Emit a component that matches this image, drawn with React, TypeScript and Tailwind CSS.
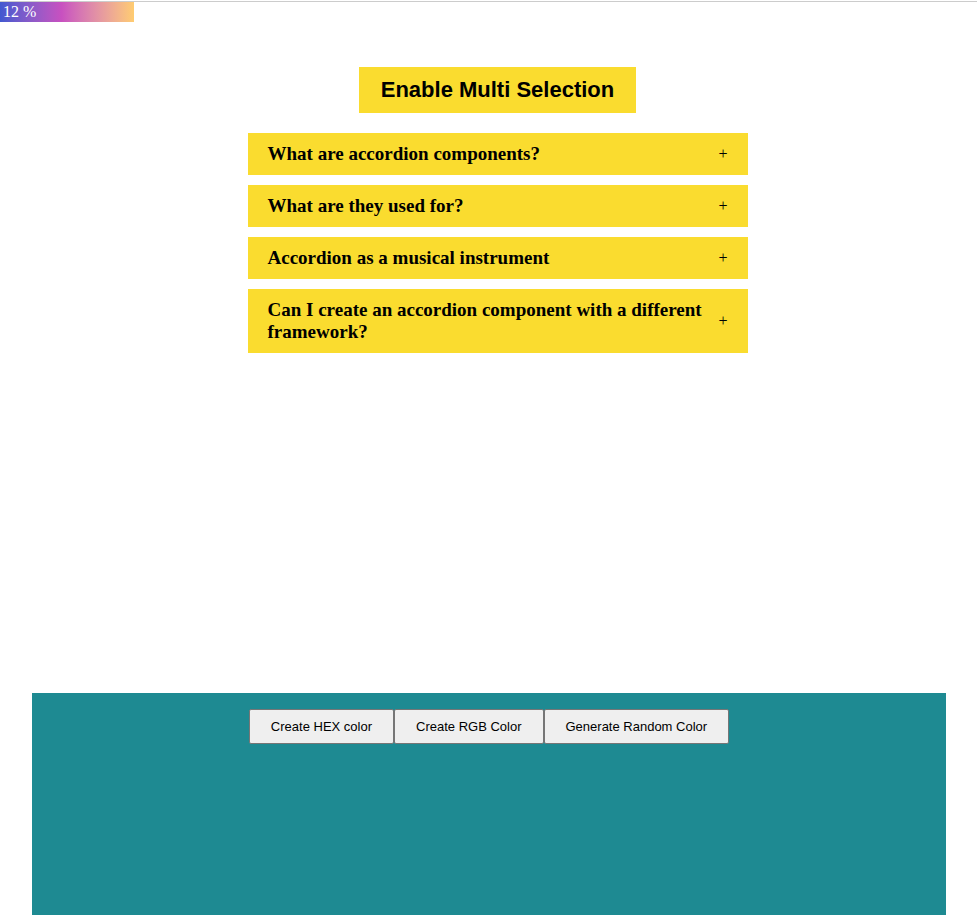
import { useState } from "react";

const questions = [
  "What are accordion components?",
  "What are they used for?",
  "Accordion as a musical instrument",
  "Can I create an accordion component with a different framework?",
];

const colorActions = ["Create HEX color", "Create RGB Color", "Generate Random Color"];

function ProgressBar({ value }: { value: number }) {
  return (
    <div className="pt-px">
      <div className="border-t border-[#cccccc]">
        <div
          className="flex h-5 w-[134px] items-center bg-linear-to-r from-[#4158d0] via-[#c850c0] via-46% to-[#ffcc70] pl-[3px] text-base text-white"
          role="progressbar"
          aria-label="Scroll progress"
          aria-valuenow={value}
        >
          {value} %
        </div>
      </div>
    </div>
  );
}

function Accordion() {
  const [multi, setMulti] = useState(false);
  const [open, setOpen] = useState<number[]>([]);

  const toggle = (index: number) => {
    if (open.includes(index)) setOpen(open.filter((i) => i !== index));
    else setOpen(multi ? [...open, index] : [index]);
  };

  return (
    <section className="flex min-h-[671px] flex-col items-center gap-5 pt-[45px] pl-[18px]">
      <button
        type="button"
        aria-pressed={multi}
        onClick={() => setMulti(!multi)}
        className="bg-[#fadc2f] px-[22px] py-[11px] font-['Liberation_Sans',Arial,sans-serif] text-[22px] leading-6 font-bold text-black"
      >
        Enable Multi Selection
      </button>
      <div className="flex w-full max-w-[500px] flex-col gap-[10px]">
        {questions.map((question, index) => (
          <button
            key={question}
            type="button"
            aria-expanded={open.includes(index)}
            onClick={() => toggle(index)}
            className="flex items-center justify-between gap-2 bg-[#fadc2f] px-5 py-[10px] text-left text-black"
          >
            <span className="text-[19px] leading-[22px] font-bold">{question}</span>
            <span className="text-base leading-5">+</span>
          </button>
        ))}
      </div>
    </section>
  );
}

function ColorGenerator() {
  return (
    <section className="mr-[31px] ml-8 flex h-[222px] items-start justify-center bg-[#1e8a92] pt-4">
      {colorActions.map((label) => (
        <button
          key={label}
          type="button"
          className="h-[35px] rounded-[2px] border border-[#767676] bg-[#efefef] px-[21px] font-['Liberation_Sans',Arial,sans-serif] text-[13px] text-black"
        >
          {label}
        </button>
      ))}
    </section>
  );
}

export default function App() {
  return (
    <main className="min-h-screen bg-white font-['Liberation_Serif','Times_New_Roman',serif] text-black">
      <ProgressBar value={12} />
      <Accordion />
      <ColorGenerator />
    </main>
  );
}
